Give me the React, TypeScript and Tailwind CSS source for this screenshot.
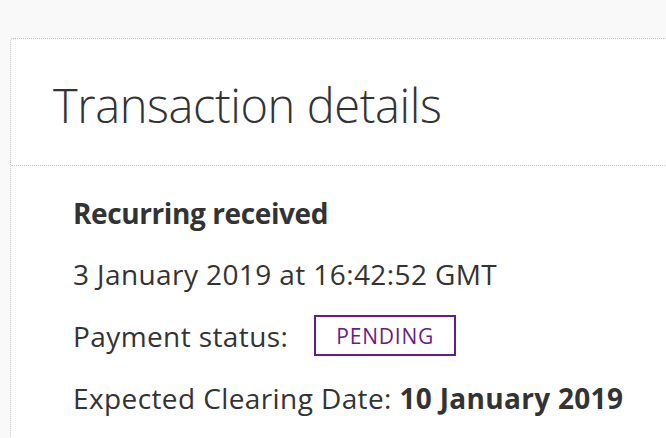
export default function App() {
  return (
    <div className="min-h-screen w-[666px] h-[438px] overflow-hidden bg-[#f9f9f9] text-[#333] font-['Open_Sans',sans-serif]">
      <div className="pt-[38px] pl-[10px]">
        {/* Card runs past the right edge of the window */}
        <div className="w-[700px] h-[420px] bg-white border border-dotted border-[#c4c4c4] rounded-[3px]">
          <div className="h-[127px] flex items-center pl-[42px] border-b border-dotted border-[#c4c4c4]">
            <h1 className="text-[47px] font-light leading-none tracking-[-0.4px] pt-[6px]">Transaction details</h1>
          </div>

          <div className="pl-[62px] pt-[29px] text-[28px] leading-[36px] tracking-[0.4px]">
            <p className="font-bold tracking-[-0.4px]">Recurring received</p>
            <p className="mt-[25px]">3 January 2019 at 16:42:52 GMT</p>
            <div className="mt-[23px] flex items-center">
              <span>Payment status:</span>
              <span className="ml-[26px] h-[41px] w-[142px] flex items-center justify-center border-2 border-[#6a1b8a] text-[#6a1b8a] text-[21px] tracking-[0.8px]">
                PENDING
              </span>
            </div>
            <p className="mt-[24px]">
              Expected Clearing Date: <span className="font-bold tracking-[0.3px]">10 January 2019</span>
            </p>
          </div>
        </div>
      </div>
    </div>
  );
}
